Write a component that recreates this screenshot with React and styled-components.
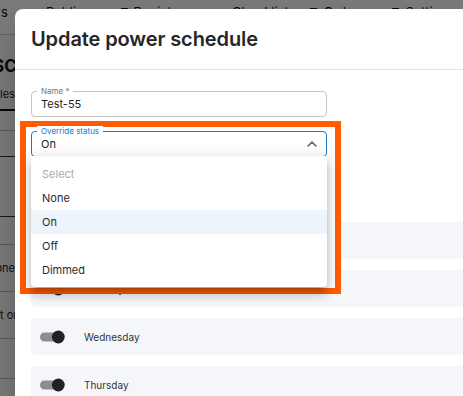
import React from "react";
import styled, { createGlobalStyle } from "styled-components";

const GlobalStyle = createGlobalStyle`
  html, body { margin: 0; padding: 0; }
  body {
    width: 463px; height: 396px; overflow: hidden;
    font-family: Inter, "Noto Sans", sans-serif;
    background: #fff;
  }
`;

const Page = styled.div`
  position: relative;
  width: 463px;
  height: 396px;
  overflow: hidden;
  background: #fff;
`;

const Header = styled.header`
  height: 35px;
  box-sizing: border-box;
  border-bottom: 1px solid #cfcfcf;
  display: flex;
  align-items: flex-start;
  padding-top: 4px;
  font-size: 13px;
  color: #111;
  white-space: nowrap;
`;

const NavItem = styled.span`
  display: inline-flex;
  align-items: center;
  gap: 5px;
  margin-left: ${(p) => p.$ml}px;
  line-height: 16px;
`;

const NavIcon = styled.span`
  width: 9px;
  height: 9px;
  border: 1.5px solid #111;
  border-radius: 2px;
  box-sizing: border-box;
`;

const Content = styled.div`
  display: flex;
  flex-direction: column;
`;

const PageHeading = styled.div`
  margin-top: 21px;
  margin-left: -7px;
  font-size: 17px;
  font-weight: 700;
  color: #111;
  line-height: 20px;
  white-space: nowrap;
`;

const TabBar = styled.div`
  margin-top: 2px;
  height: 31px;
  border-bottom: 2px solid #111;
  width: 15px;
  display: flex;
  justify-content: flex-end;
  align-items: center;
  font-size: 11px;
  color: #222;
  white-space: nowrap;
`;

const TableRow = styled.div`
  height: ${(p) => p.$h}px;
  box-sizing: border-box;
  border-bottom: 1px solid ${(p) => (p.$dark ? "#333" : "#bdbdbd")};
  width: 15px;
  display: flex;
  align-items: center;
  justify-content: ${(p) => (p.$end ? "flex-end" : "flex-start")};
  font-size: 11px;
  color: #222;
  white-space: nowrap;
`;

const Backdrop = styled.div`
  position: absolute;
  inset: 0;
  background: rgba(0, 0, 0, 0.52);
`;

const Dialog = styled.div`
  position: absolute;
  left: 15px;
  top: 9px;
  width: 480px;
  height: 420px;
  background: #fff;
  border-radius: 8px 8px 0 0;
  box-shadow: 0 11px 15px -7px rgba(0,0,0,.2), 0 24px 38px 3px rgba(0,0,0,.14);
`;

const DialogTitle = styled.h2`
  margin: 0;
  padding: 14px 16px;
  font-size: 20px;
  line-height: 32px;
  font-weight: 600;
  color: #262626;
  border-bottom: 1px solid #e3e3e3;
  letter-spacing: -0.1px;
`;

const DialogBody = styled.div`
  position: relative;
  padding: 21px 16px 0 16px;
  display: flex;
  flex-direction: column;
`;

const Field = styled.div`
  position: relative;
  z-index: ${(p) => (p.$raised ? 3 : "auto")};
  width: 296px;
  height: 26px;
  box-sizing: border-box;
  margin-top: ${(p) => p.$mt || 0}px;
  border: 1px solid ${(p) => (p.$focused ? "#1976d2" : "#c4c4c4")};
  border-radius: 4px;
  display: flex;
  align-items: center;
  padding: 0 9px;
  font-size: 11px;
  color: #222;
`;

const FieldLabel = styled.span`
  position: absolute;
  left: 5px;
  top: -6px;
  padding: 0 4px;
  background: #fff;
  font-size: 8px;
  line-height: 10px;
  color: ${(p) => (p.$focused ? "#1976d2" : "#777")};
`;

const FieldValue = styled.span`
  flex: 1;
`;

const Menu = styled.ul`
  position: absolute;
  top: 100%;
  left: -1px;
  width: 296px;
  margin: 0;
  padding: 6px 0 5px;
  list-style: none;
  background: #fff;
  border-radius: 0 0 4px 4px;
  box-shadow: 0 5px 5px -3px rgba(0,0,0,.2), 0 8px 10px 1px rgba(0,0,0,.14), 0 3px 14px 2px rgba(0,0,0,.12);
`;

const MenuItem = styled.li`
  height: 24px;
  display: flex;
  align-items: center;
  padding: 0 11px;
  font-size: 11px;
  color: ${(p) => (p.$placeholder ? "#ababab" : "#2b2b2b")};
  background: ${(p) => (p.$selected ? "rgba(25,118,210,0.08)" : "transparent")};
`;

const Highlight = styled.div`
  position: absolute;
  left: 5px;
  top: 51px;
  width: 321px;
  height: 173px;
  box-sizing: border-box;
  border: 6px solid #fe5b02;
  background: #fff;
  z-index: 2;
`;

const DayList = styled.div`
  margin-top: 65px;
  display: flex;
  flex-direction: column;
  gap: 11px;
`;

const DayRow = styled.div`
  height: 37px;
  background: #f5f6fa;
  border-radius: 4px;
  display: flex;
  align-items: center;
  padding-left: 9px;
  gap: 19px;
  font-size: 10px;
  color: #333;
`;

const Toggle = () => (
  <svg width="25" height="14" viewBox="0 0 25 14">
    <rect x="0" y="2.5" width="22" height="9" rx="4.5" fill="#8d8d8d" />
    <circle cx="18.3" cy="7" r="6.4" fill="#222" />
  </svg>
);

const ChevronUp = () => (
  <svg width="10" height="6" viewBox="0 0 10 6">
    <path d="M1 5 L5 1.2 L9 5" fill="none" stroke="#666" strokeWidth="1.6" strokeLinecap="round" strokeLinejoin="round" />
  </svg>
);

const days = ["Monday", "Tuesday", "Wednesday", "Thursday"];
const options = [
  { label: "Select", placeholder: true },
  { label: "None" },
  { label: "On", selected: true },
  { label: "Off" },
  { label: "Dimmed" },
];

export default function App() {
  return (
    <>
      <GlobalStyle />
      <Page>
        <Header>
          <NavItem $ml={1}>s</NavItem>
          <NavItem $ml={38}>Public</NavItem>
          <NavItem $ml={36}><NavIcon />Registry</NavItem>
          <NavItem $ml={48}>Checklists</NavItem>
          <NavItem $ml={14}><NavIcon />Orders</NavItem>
          <NavItem $ml={26}><NavIcon />Settings</NavItem>
        </Header>
        <Content>
          <PageHeading>SCHEDULES</PageHeading>
          <TabBar>Schedules</TabBar>
          <TableRow $h={20} />
          <TableRow $h={26} $dark />
          <TableRow $h={60} $dark />
          <TableRow $h={28} />
          <TableRow $h={47} $end>Everyone</TableRow>
          <TableRow $h={47}>t on</TableRow>
          <TableRow $h={40} />
        </Content>
        <Backdrop />
        <Dialog>
          <DialogTitle>Update power schedule</DialogTitle>
          <DialogBody>
            <Field>
              <FieldLabel>Name *</FieldLabel>
              <FieldValue>Test-55</FieldValue>
            </Field>
            <Field $mt={14} $focused $raised>
              <FieldLabel $focused>Override status</FieldLabel>
              <FieldValue>On</FieldValue>
              <ChevronUp />
              <Menu>
                {options.map((o) => (
                  <MenuItem key={o.label} $placeholder={o.placeholder} $selected={o.selected}>
                    {o.label}
                  </MenuItem>
                ))}
              </Menu>
            </Field>
            <Highlight />
            <DayList>
              {days.map((d) => (
                <DayRow key={d}>
                  <Toggle />
                  {d}
                </DayRow>
              ))}
            </DayList>
          </DialogBody>
        </Dialog>
      </Page>
    </>
  );
}
